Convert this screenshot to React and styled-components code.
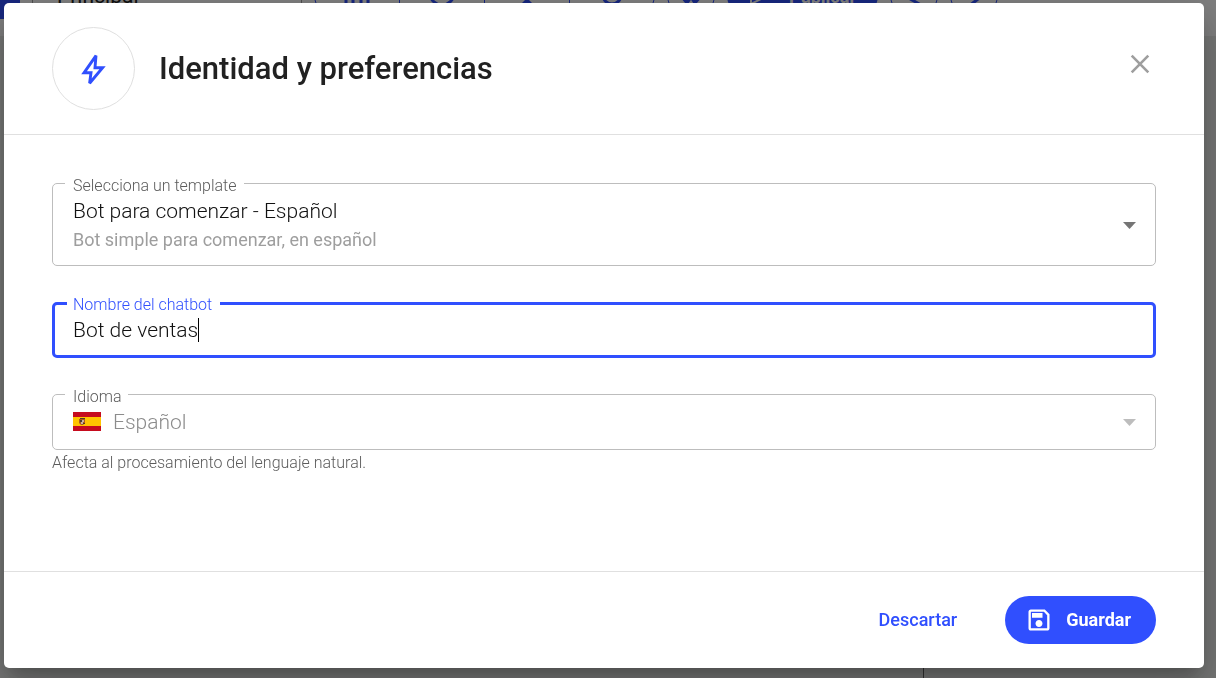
import React, { useId, useState } from "react";
import styled, { createGlobalStyle, css } from "styled-components";

const color = {
  primary: "#304ffe",
  text: "#111111",
  heading: "#212121",
  textMedium: "#757575",
  label: "#5c5c5c",
  textLight: "#9e9e9e",
  disabled: "#8c8c8c",
  border: "#bdbdbd",
  divider: "#e0e0e0",
};

const GlobalStyle = createGlobalStyle`
  *, *::before, *::after { box-sizing: border-box; }
  body {
    margin: 0;
    font-family: Roboto, "Liberation Sans", sans-serif;
    color: ${color.heading};
  }
  button, input, select { font: inherit; }
`;

/* Editor behind the dialog */

const Editor = styled.div`
  position: fixed;
  inset: 0;
  display: flex;
  flex-direction: column;
  overflow: hidden;
  background: #eceeec;
`;

const Toolbar = styled.header`
  display: flex;
  align-items: flex-start;
  gap: 12px;
  height: 36px;
  flex: none;
  background: #fff;
`;

const raised = css`
  flex: none;
  height: 48px;
  margin-top: -29px;
`;

const Brand = styled.div`
  ${raised}
  width: 20px;
  background: ${color.primary};
`;

const FlowName = styled.div`
  ${raised}
  display: flex;
  align-items: center;
  width: 270px;
  padding: 2px 24px 0;
  border: 1px solid ${color.textLight};
  font-size: 21px;
`;

const ToolGroup = styled.div`
  ${raised}
  display: flex;
  width: 341px;
  border: 1px solid ${color.primary};
  border-radius: 24px;
`;

const ToolButton = styled.button`
  display: flex;
  flex: 1;
  align-items: center;
  justify-content: center;
  padding: 0;
  border: 0;
  background: none;
  color: ${color.primary};

  & + & {
    border-left: 1px solid ${color.primary};
  }
`;

const RoundButton = styled.button`
  ${raised}
  display: flex;
  align-items: center;
  justify-content: center;
  width: 48px;
  padding: 0;
  border: 1px solid ${color.primary};
  border-radius: 24px;
  background: none;
  color: ${color.primary};
`;

const PublishButton = styled.button`
  ${raised}
  display: flex;
  align-items: center;
  justify-content: center;
  gap: 20px;
  width: 151px;
  padding: 2px 0 0;
  border: 0;
  border-radius: 24px;
  background: ${color.primary};
  color: #fff;
  font-size: 18px;
  font-weight: 700;
`;

const Canvas = styled.main`
  position: relative;
  flex: 1;
`;

const Connector = styled.div`
  position: absolute;
  right: 24%;
  bottom: 0;
  width: 1px;
  height: 80px;
  background: #616161;
`;

/* Dialog */

const Backdrop = styled.div`
  position: relative;
  display: flex;
  min-height: 100vh;
  padding: 3px 12px 10px 4px;
  background: rgba(0, 0, 0, 0.5);
`;

const Dialog = styled.section`
  display: flex;
  flex: 1;
  flex-direction: column;
  min-width: 0;
  border-radius: 5px;
  background: #fff;
  box-shadow: 0 11px 15px -7px rgba(0, 0, 0, 0.2),
    0 24px 38px 3px rgba(0, 0, 0, 0.14), 0 9px 46px 8px rgba(0, 0, 0, 0.12);
`;

const DialogHeader = styled.header`
  display: flex;
  align-items: center;
  gap: 24px;
  padding: 24px 48px;
  border-bottom: 1px solid ${color.divider};
`;

const IconCircle = styled.div`
  display: flex;
  flex: none;
  align-items: center;
  justify-content: center;
  width: 83px;
  height: 83px;
  border: 1px solid ${color.divider};
  border-radius: 50%;
  color: ${color.primary};
`;

const Title = styled.h1`
  flex: 1;
  margin: 0;
  font-size: 31px;
  font-weight: 500;
  line-height: 40px;
`;

const CloseButton = styled.button`
  display: flex;
  align-self: flex-start;
  align-items: center;
  justify-content: center;
  width: 32px;
  height: 34px;
  margin-top: 20px;
  padding: 0;
  border: 0;
  background: none;
  color: ${color.textLight};
  cursor: pointer;
`;

const DialogBody = styled.form`
  display: flex;
  flex: 1;
  flex-direction: column;
  gap: 23px;
  padding: 35px 48px;
`;

const Outline = styled.fieldset`
  position: relative;
  min-width: 0;
  margin: 0;
  padding: 0 ${(p) => (p.$active ? 18 : 20)}px;
  border: ${(p) => (p.$active ? `3px solid ${color.primary}` : `1px solid ${color.border}`)};
  border-radius: 5px;
`;

const Legend = styled.legend`
  margin-left: ${(p) => (p.$active ? -6 : -8)}px;
  padding: ${(p) => (p.$active ? "6px 8px 2px 6px" : "6px 7px 0 8px")};
  font-size: 16px;
  font-weight: 300;
  line-height: 20px;
  color: ${(p) => (p.$active ? color.primary : color.label)};
`;

const ValueRow = styled.div`
  display: flex;
  align-items: center;
  gap: 12px;
  height: ${(p) => (p.$active ? 38 : 42)}px;
  padding-bottom: ${(p) => (p.$active ? 12 : 13)}px;
`;

const control = css`
  padding: 0;
  border: 0;
  outline: 0;
  background: none;
  font-size: 21px;
  font-weight: 300;
  line-height: 28px;
  color: ${color.text};
`;

const Select = styled.select`
  ${control}
  flex: 1;
  width: 100%;
  min-width: 0;
  min-height: 28px;
  appearance: none;
  cursor: pointer;

  &:disabled {
    color: ${color.disabled};
    opacity: 1;
    cursor: default;
  }
`;

const Description = styled.p`
  margin: 0;
  padding-bottom: 13px;
  font-size: 18px;
  line-height: 24px;
  color: ${color.textLight};
`;

const TemplateValue = styled.div`
  display: flex;
  flex-direction: column;
  gap: 3px;
  padding-top: 1px;
`;

const Arrow = styled.svg`
  position: absolute;
  top: ${(p) => p.$top}px;
  right: 19px;
  width: 13px;
  height: 7px;
  fill: ${(p) => (p.$muted ? color.border : color.textMedium)};
  pointer-events: none;
`;

const TextInput = styled.input`
  ${control}
  field-sizing: content;
  max-width: 100%;
  caret-color: transparent;
`;

const InputLine = styled.div`
  display: flex;
  align-items: center;
  width: 100%;
`;

const Caret = styled.span`
  width: 1px;
  height: 24px;
  background: #000;
`;

const Flag = styled.svg`
  flex: none;
  width: 28px;
  height: 19px;
`;

const Helper = styled.p`
  margin: 0;
  padding-top: 3px;
  font-size: 16px;
  font-weight: 300;
  line-height: 20px;
  color: ${color.label};
`;

const DialogFooter = styled.footer`
  display: flex;
  justify-content: flex-end;
  gap: 24px;
  padding: 24px 48px;
  border-top: 1px solid ${color.divider};
`;

const ActionButton = styled.button`
  display: flex;
  align-items: center;
  gap: 13px;
  height: 48px;
  padding: ${(p) => (p.$filled ? "0 25px 1px 20px" : "0 24px 1px")};
  border: 0;
  border-radius: 24px;
  background: ${(p) => (p.$filled ? color.primary : "none")};
  color: ${(p) => (p.$filled ? "#fff" : color.primary)};
  font-size: 18px;
  font-weight: ${(p) => (p.$filled ? 700 : 500)};
  cursor: pointer;
`;

function DropArrow({ top, muted }) {
  return (
    <Arrow $top={top} $muted={muted} viewBox="0 0 13 7" aria-hidden="true">
      <path d="M0 0h13L6.500 7z" />
    </Arrow>
  );
}

function ToolIcon({ children }) {
  return (
    <svg width="28" height="28" viewBox="0 0 28 28" fill="none" stroke="currentColor" strokeWidth="3" aria-hidden="true">
      {children}
    </svg>
  );
}

function BackgroundEditor() {
  return (
    <Editor aria-hidden="true" inert>
      <Toolbar>
        <Brand />
        <FlowName>Principal</FlowName>
        <ToolGroup>
          <ToolButton><ToolIcon><path d="M3 8v20M10 14v14M18 4v24M25 11v17" /></ToolIcon></ToolButton>
          <ToolButton><ToolIcon><circle cx="14" cy="12" r="12" /></ToolIcon></ToolButton>
          <ToolButton><ToolIcon><path d="M14 17l7 7H7z" fill="currentColor" stroke="none" /></ToolIcon></ToolButton>
          <ToolButton><ToolIcon><circle cx="14" cy="14" r="9" /></ToolIcon></ToolButton>
        </ToolGroup>
        <RoundButton><ToolIcon><path d="M5 16l5 6 4-6 4 6 5-6" /></ToolIcon></RoundButton>
        <PublishButton>
          <svg width="20" height="20" viewBox="0 0 20 20" fill="none" stroke="currentColor" strokeWidth="2">
            <path d="M2 2l16 8L2 18z" />
          </svg>
          Publicar
        </PublishButton>
        <RoundButton><ToolIcon><path d="M5 15l16 9M12 17h8" /></ToolIcon></RoundButton>
        <RoundButton><ToolIcon><path d="M9 25l9-7" /></ToolIcon></RoundButton>
      </Toolbar>
      <Canvas><Connector /></Canvas>
    </Editor>
  );
}

export default function App() {
  const id = useId();
  const [name, setName] = useState("Bot de ventas");

  return (
    <>
      <GlobalStyle />
      <BackgroundEditor />
      <Backdrop>
        <Dialog role="dialog" aria-modal="true" aria-labelledby={`${id}-title`}>
          <DialogHeader>
            <IconCircle>
              <svg width="32" height="32" viewBox="0 0 32 32" fill="none" stroke="currentColor" strokeWidth="2.900" strokeMiterlimit="2.600" aria-hidden="true">
                <path d="M18 2.600L6 19.800H13L11.600 30.200L24.600 14.700H17z" />
              </svg>
            </IconCircle>
            <Title id={`${id}-title`}>Identidad y preferencias</Title>
            <CloseButton type="button" aria-label="Cerrar">
              <svg width="20" height="20" viewBox="0 0 20 20" fill="none" stroke="currentColor" strokeWidth="2.600" aria-hidden="true">
                <path d="M1.700 1.700l16.600 16.600M18.300 1.700L1.700 18.300" />
              </svg>
            </CloseButton>
          </DialogHeader>

          <DialogBody id={`${id}-form`} onSubmit={(e) => e.preventDefault()}>
            <Outline>
              <Legend><label htmlFor={`${id}-template`}>Selecciona un template</label></Legend>
              <TemplateValue>
                <Select id={`${id}-template`} aria-describedby={`${id}-description`}>
                  <option>Bot para comenzar - Español</option>
                </Select>
                <Description id={`${id}-description`}>Bot simple para comenzar, en español</Description>
              </TemplateValue>
              <DropArrow top={26} />
            </Outline>

            <Outline $active>
              <Legend $active><label htmlFor={`${id}-name`}>Nombre del chatbot</label></Legend>
              <ValueRow $active>
                <InputLine>
                  <TextInput id={`${id}-name`} type="text" value={name} onChange={(e) => setName(e.target.value)} />
                  <Caret aria-hidden="true" />
                </InputLine>
              </ValueRow>
            </Outline>

            <div>
              <Outline>
                <Legend><label htmlFor={`${id}-language`}>Idioma</label></Legend>
                <ValueRow>
                  <Flag viewBox="0 0 28 19" aria-hidden="true">
                    <path fill="#c60b1e" d="M0 0h28v19H0z" />
                    <path fill="#ffc400" d="M0 5h28v9H0z" />
                    <path fill="#ad5a19" d="M6 7h6v4l-2 2H8l-2-2z" />
                    <path fill="#4c3a2c" d="M7 6h5v1H7zM7 8h2v2H7zM10 11h2v1h-2z" />
                    <path fill="#c8b1a0" d="M9 8h2v2H9zM8 10h2v2H8z" />
                  </Flag>
                  <Select id={`${id}-language`} disabled aria-describedby={`${id}-helper`}>
                    <option>Español</option>
                  </Select>
                </ValueRow>
                <DropArrow top={12} muted />
              </Outline>
              <Helper id={`${id}-helper`}>Afecta al procesamiento del lenguaje natural.</Helper>
            </div>
          </DialogBody>

          <DialogFooter>
            <ActionButton type="button">Descartar</ActionButton>
            <ActionButton type="submit" form={`${id}-form`} $filled>
              <svg width="28" height="28" viewBox="0 0 24 24" fill="currentColor" aria-hidden="true">
                <path d="M17 3H5c-1.110 0-2 .9-2 2v14c0 1.100.890 2 2 2h14c1.100 0 2-.9 2-2V7l-4-4zm2 16H5V5h11.170L19 7.830V19zm-7-7c-1.660 0-3 1.340-3 3s1.340 3 3 3 3-1.340 3-3-1.340-3-3-3zM6 6h9v4H6z" />
              </svg>
              Guardar
            </ActionButton>
          </DialogFooter>
        </Dialog>
      </Backdrop>
    </>
  );
}
